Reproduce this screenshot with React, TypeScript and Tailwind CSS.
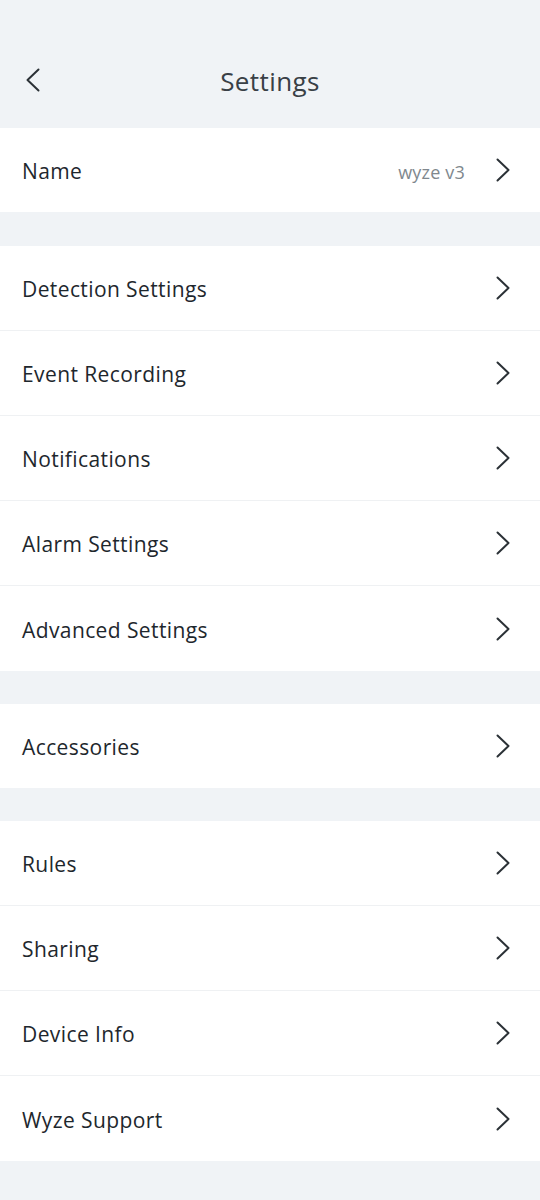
import React from "react";

const Chevron = ({ dir = "right" }: { dir?: "left" | "right" }) => (
  <svg width="16" height="24" viewBox="0 0 16 24" fill="none" className="shrink-0">
    <path
      d={dir === "right" ? "M2.5 1.5 L13.5 12 L2.5 22.5" : "M13.5 1.5 L2.5 12 L13.5 22.5"}
      stroke="#2b3136"
      strokeWidth="2"
      strokeLinecap="round"
      strokeLinejoin="round"
    />
  </svg>
);

const Row = ({ label, value, last, single }: { label: string; value?: string; last?: boolean; single?: boolean }) => (
  <div
    className={`flex items-center justify-between bg-white pl-[22px] pr-[29px] ${single ? "h-[84px]" : "h-[85px]"} ${
      last ? "" : "border-b border-[#eff1f3]"
    }`}
  >
    <span className="mt-[4px] text-[21px] tracking-[0.4px] text-[#1e272d]">{label}</span>
    <div className="flex items-center gap-[30px]">
      {value && <span className="mt-[4px] text-[18px] tracking-[0.2px] text-[#80888e]">{value}</span>}
      <Chevron />
    </div>
  </div>
);

const Group = ({ items }: { items: { label: string; value?: string }[] }) => (
  <div className="flex flex-col">
    {items.map((it, i) => (
      <Row
        key={it.label}
        label={it.label}
        value={it.value}
        last={i === items.length - 1}
        single={items.length === 1}
      />
    ))}
  </div>
);

export default function App() {
  return (
    <div
      className="flex min-h-[1200px] w-[540px] flex-col bg-[#f0f3f6]"
      style={{ fontFamily: "'Open Sans', 'Noto Sans', sans-serif" }}
    >
      <div className="relative flex h-[128px] items-center justify-center">
        <div className="absolute left-[25px] top-[68px]">
          <Chevron dir="left" />
        </div>
        <span className="mt-[34px] text-[26px] tracking-[0.4px] text-[#394046]">Settings</span>
      </div>
      <Group items={[{ label: "Name", value: "wyze v3" }]} />
      <div className="h-[34px]" />
      <Group
        items={[
          { label: "Detection Settings" },
          { label: "Event Recording" },
          { label: "Notifications" },
          { label: "Alarm Settings" },
          { label: "Advanced Settings" },
        ]}
      />
      <div className="h-[33px]" />
      <Group items={[{ label: "Accessories" }]} />
      <div className="h-[33px]" />
      <Group
        items={[
          { label: "Rules" },
          { label: "Sharing" },
          { label: "Device Info" },
          { label: "Wyze Support" },
        ]}
      />
    </div>
  );
}
